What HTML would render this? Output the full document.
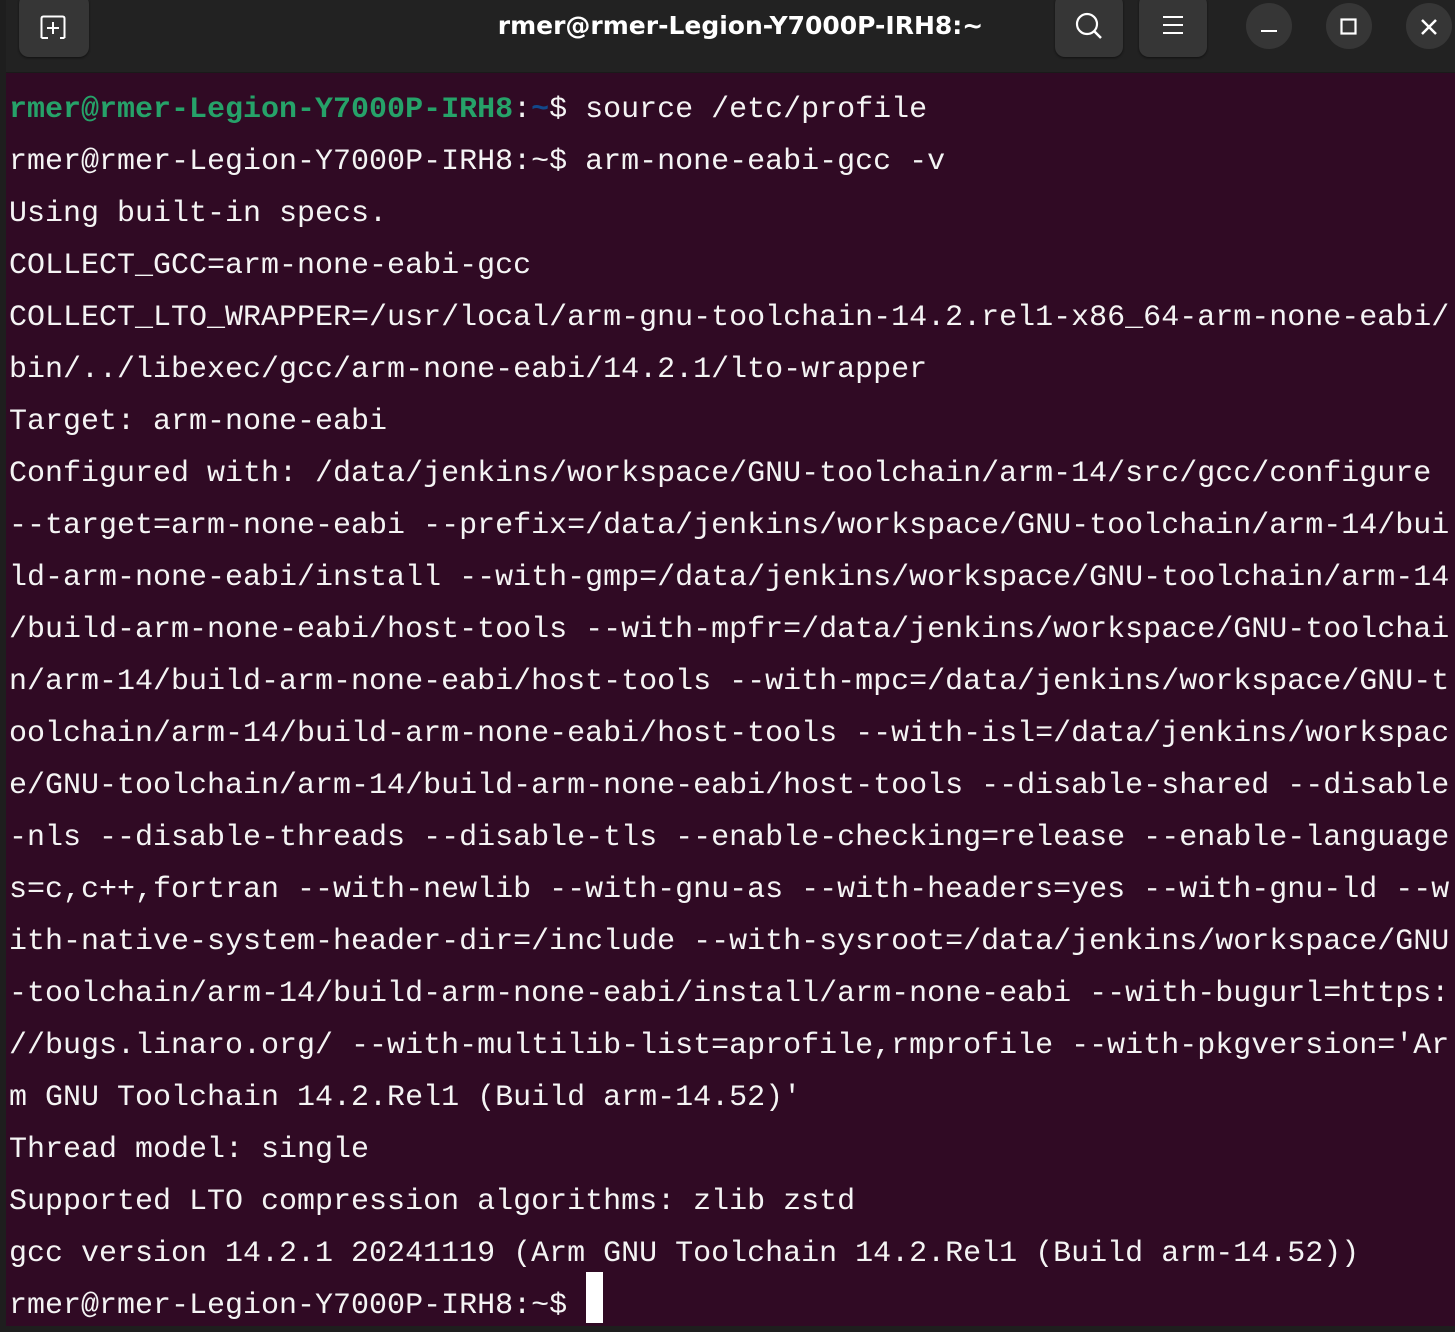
<!DOCTYPE html>
<html><head><meta charset="utf-8"><style>
html,body{margin:0;padding:0;width:1455px;height:1332px;overflow:hidden;background:#1e1e1e}
.win{position:absolute;left:6px;top:0;width:1449px;height:1326px;background:#300a24}
.tb{position:absolute;left:6px;top:0;width:1449px;height:72px;background:#222222;border-bottom:1px solid #1a1a1a}
.btn{position:absolute;top:-6px;height:63px;background:#363636;border-radius:10px;box-shadow:0 1px 2px #111}
.circ{position:absolute;top:3px;width:46px;height:46px;border-radius:50%;background:#363636}
.title{position:absolute;left:0;width:1481px;top:11px;text-align:center;color:#fff;font:bold 25px "DejaVu Sans","Liberation Sans",sans-serif}
.term{position:absolute;left:9px;top:84px;font-family:"Liberation Mono",monospace;font-size:30px;line-height:52px;color:#f4f4f4;white-space:pre}
.g{color:#26a269;font-weight:bold}.b{color:#12488b;font-weight:bold}
.cur{position:absolute;left:586px;top:1272px;width:17px;height:51px;background:#fff}
</style></head><body>
<div class="win"></div>
<div class="tb"></div>
<div class="btn" style="left:19px;width:70px"></div>
<svg style="position:absolute;left:40px;top:14px" width="30" height="26" viewBox="0 0 30 26"><path d="M1.5 24V4.5Q1.5 2.5 3.5 2.5H22.5Q24.5 2.5 24.5 4.5V24M8 24H1.5M24.5 24H20M13 8V20M7 14H19" fill="none" stroke="#fff" stroke-width="2"/></svg>
<div class="title">rmer@rmer-Legion-Y7000P-IRH8:~</div>
<div class="btn" style="left:1055px;width:68px"></div>
<svg style="position:absolute;left:1074px;top:11px" width="32" height="30"><circle cx="13" cy="13" r="10" fill="none" stroke="#fff" stroke-width="2.2"/><path d="M20 20L27 27" stroke="#fff" stroke-width="2.5"/></svg>
<div class="btn" style="left:1139px;width:68px"></div>
<svg style="position:absolute;left:1162px;top:15px" width="22" height="20"><path d="M1 2H21M1 10H21M1 18H21" stroke="#fff" stroke-width="2"/></svg>
<div class="circ" style="left:1246px"></div>
<svg style="position:absolute;left:1260px;top:28px" width="18" height="6"><path d="M1 3H17" stroke="#fff" stroke-width="2"/></svg>
<div class="circ" style="left:1326px"></div>
<svg style="position:absolute;left:1340px;top:18px" width="18" height="18"><rect x="1.5" y="1.5" width="14" height="14" fill="none" stroke="#fff" stroke-width="2.2"/></svg>
<div class="circ" style="left:1406px"></div>
<svg style="position:absolute;left:1420px;top:18px" width="18" height="18"><path d="M2 2L16 16M16 2L2 16" stroke="#fff" stroke-width="2.5"/></svg>
<div class="term"><span class="g">rmer@rmer-Legion-Y7000P-IRH8</span>:<span class="b">~</span>$ source /etc/profile
rmer@rmer-Legion-Y7000P-IRH8:~$ arm-none-eabi-gcc -v
Using built-in specs.
COLLECT_GCC=arm-none-eabi-gcc
COLLECT_LTO_WRAPPER=/usr/local/arm-gnu-toolchain-14.2.rel1-x86_64-arm-none-eabi/
bin/../libexec/gcc/arm-none-eabi/14.2.1/lto-wrapper
Target: arm-none-eabi
Configured with: /data/jenkins/workspace/GNU-toolchain/arm-14/src/gcc/configure
--target=arm-none-eabi --prefix=/data/jenkins/workspace/GNU-toolchain/arm-14/bui
ld-arm-none-eabi/install --with-gmp=/data/jenkins/workspace/GNU-toolchain/arm-14
/build-arm-none-eabi/host-tools --with-mpfr=/data/jenkins/workspace/GNU-toolchai
n/arm-14/build-arm-none-eabi/host-tools --with-mpc=/data/jenkins/workspace/GNU-t
oolchain/arm-14/build-arm-none-eabi/host-tools --with-isl=/data/jenkins/workspac
e/GNU-toolchain/arm-14/build-arm-none-eabi/host-tools --disable-shared --disable
-nls --disable-threads --disable-tls --enable-checking=release --enable-language
s=c,c++,fortran --with-newlib --with-gnu-as --with-headers=yes --with-gnu-ld --w
ith-native-system-header-dir=/include --with-sysroot=/data/jenkins/workspace/GNU
-toolchain/arm-14/build-arm-none-eabi/install/arm-none-eabi --with-bugurl=https:
//bugs.linaro.org/ --with-multilib-list=aprofile,rmprofile --with-pkgversion='Ar
m GNU Toolchain 14.2.Rel1 (Build arm-14.52)'
Thread model: single
Supported LTO compression algorithms: zlib zstd
gcc version 14.2.1 20241119 (Arm GNU Toolchain 14.2.Rel1 (Build arm-14.52))
rmer@rmer-Legion-Y7000P-IRH8:~$ </div>
<div class="cur"></div>
</body></html>
